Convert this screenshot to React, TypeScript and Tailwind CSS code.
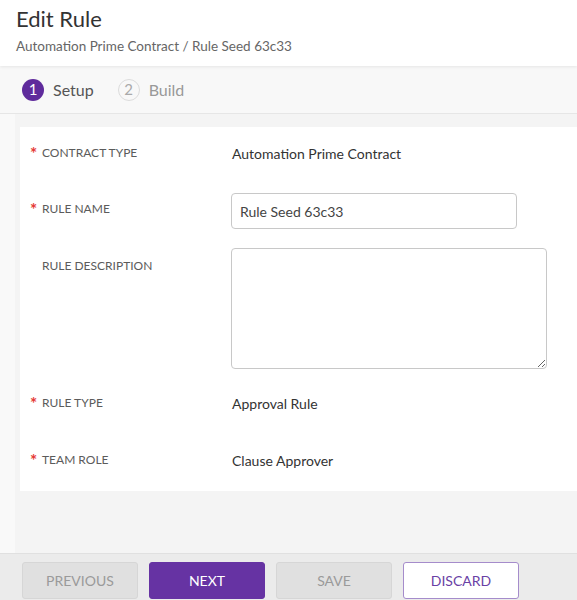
import React from 'react';

const font = { fontFamily: 'Lato, "Noto Sans", sans-serif' };

const Label = ({ text, required }: { text: string; required?: boolean }) => (
  <div className="flex w-[201px] shrink-0 items-center text-[12px] leading-4 text-[#5b5b5b] uppercase">
    <span className="w-3 translate-y-[1px] text-[17px] leading-4 font-bold text-[#e53935]">{required ? '*' : ''}</span>
    {text}
  </div>
);

const App = () => {
  return (
    <div className="flex h-[600px] w-[577px] flex-col overflow-hidden bg-[#f4f4f4]" style={font}>
      {/* header */}
      <div className="relative z-10 h-[66px] shrink-0 bg-white px-4 pt-[5px] shadow-[0_1px_3px_rgba(0,0,0,0.08)]">
        <h1 className="text-[22px] leading-7 text-[#333]">Edit Rule</h1>
        <p className="mt-[5px] text-[13.5px] leading-4 text-[#666]">Automation Prime Contract / Rule Seed 63c33</p>
      </div>

      {/* stepper */}
      <div className="flex h-[48px] shrink-0 items-center gap-[10px] border-b border-[#e6e6e6] bg-[#f8f8f8] pl-[22px]">
        <div className="flex items-center gap-[9px]">
          <span className="flex h-[22px] w-[22px] items-center justify-center rounded-full bg-[#5f2b9c] text-[15px] text-white">1</span>
          <span className="text-[16px] text-[#555]">Setup</span>
        </div>
        <div className="ml-[14px] flex items-center gap-[9px]">
          <span className="flex h-[22px] w-[22px] items-center justify-center rounded-full border border-[#dcdcdc] text-[15px] text-[#aaa]">2</span>
          <span className="text-[16px] text-[#999]">Build</span>
        </div>
      </div>

      {/* main */}
      <div className="flex flex-1">
        <div className="w-[15px] bg-[#f9f9f9]" />
        <div className="flex-1 pl-[5px] pt-[13px]">
          <div className="bg-white pb-[21px] pl-[10px] pt-[16px]">
            <div className="flex h-5 items-center">
              <Label text="Contract Type" required />
              <span className="pl-px text-[14px] text-[#333]">Automation Prime Contract</span>
            </div>

            <div className="mt-[30px] flex">
              <div className="pt-[8px]">
                <Label text="Rule Name" required />
              </div>
              <input
                readOnly
                value="Rule Seed 63c33"
                className="h-[36px] w-[286px] rounded-[4px] border border-[#c8c8c8] px-2 text-[14px] text-[#444] outline-none"
                style={font}
              />
            </div>

            <div className="mt-[19px] flex">
              <div className="pt-[10px]">
                <Label text="Rule Description" />
              </div>
              <textarea
                readOnly
                className="h-[121px] w-[316px] resize rounded-[4px] border border-[#c8c8c8] outline-none"
              />
            </div>

            <div className="mt-[24px] flex h-5 items-center">
              <Label text="Rule Type" required />
              <span className="pl-px text-[14px] text-[#333]">Approval Rule</span>
            </div>

            <div className="mt-[37px] flex h-5 items-center">
              <Label text="Team Role" required />
              <span className="pl-px text-[14px] text-[#333]">Clause Approver</span>
            </div>
          </div>
        </div>
      </div>

      {/* footer */}
      <div className="flex h-[47px] shrink-0 gap-[11px] border-t border-[#e0e0e0] bg-[#ebebeb] pl-[22px] pt-[8px]">
        <button className="h-[37px] w-[116px] rounded-[3px] border border-[#d6d6d6] bg-[#e0e0e0] text-[14px] text-[#9a9a9a]">PREVIOUS</button>
        <button className="h-[37px] w-[116px] rounded-[3px] border border-[#6633a3] bg-[#6633a3] text-[14px] text-white">NEXT</button>
        <button className="h-[37px] w-[116px] rounded-[3px] border border-[#d6d6d6] bg-[#e0e0e0] text-[14px] text-[#9a9a9a]">SAVE</button>
        <button className="h-[37px] w-[116px] rounded-[3px] border border-[#a58ccb] bg-white text-[14px] text-[#6a3fa5]">DISCARD</button>
      </div>
    </div>
  );
};

export default App;
